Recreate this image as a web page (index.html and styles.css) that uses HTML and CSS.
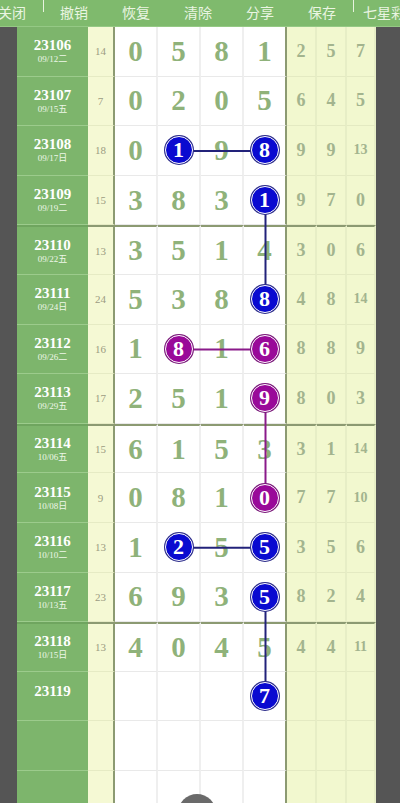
FILE: index.html
```html
<!DOCTYPE html>
<html lang="zh">
<head>
<meta charset="utf-8">
<title>七星彩走势</title>
<link rel="stylesheet" href="styles.css">
</head>
<body>
<div class="topbar">
  <span class="tab">关闭</span>
  <span class="tab sep">撤销</span>
  <span class="tab">恢复</span>
  <span class="tab">清除</span>
  <span class="tab">分享</span>
  <span class="tab">保存</span>
  <span class="tab sep">七星彩</span>
</div>
<div class="board">
  <div class="side"></div>
  <div class="grid">
    <div class="row">
      <div class="c iss"><b>23106</b><i>09/12二</i></div><div class="c sum">14</div>
      <div class="c w">0</div><div class="c w">5</div><div class="c w">8</div><div class="c w last">1</div>
      <div class="c y">2</div><div class="c y">5</div><div class="c y">7</div>
    </div>
    <div class="row">
      <div class="c iss"><b>23107</b><i>09/15五</i></div><div class="c sum">7</div>
      <div class="c w">0</div><div class="c w">2</div><div class="c w">0</div><div class="c w last">5</div>
      <div class="c y">6</div><div class="c y">4</div><div class="c y">5</div>
    </div>
    <div class="row">
      <div class="c iss"><b>23108</b><i>09/17日</i></div><div class="c sum">18</div>
      <div class="c w">0</div><div class="c w"><span class="ball b">1</span></div><div class="c w">9</div><div class="c w last"><span class="ball b">8</span></div>
      <div class="c y">9</div><div class="c y">9</div><div class="c y s">13</div>
    </div>
    <div class="row">
      <div class="c iss"><b>23109</b><i>09/19二</i></div><div class="c sum">15</div>
      <div class="c w">3</div><div class="c w">8</div><div class="c w">3</div><div class="c w last"><span class="ball b">1</span></div>
      <div class="c y">9</div><div class="c y">7</div><div class="c y">0</div>
    </div>
    <div class="row g">
      <div class="c iss"><b>23110</b><i>09/22五</i></div><div class="c sum">13</div>
      <div class="c w">3</div><div class="c w">5</div><div class="c w">1</div><div class="c w last">4</div>
      <div class="c y">3</div><div class="c y">0</div><div class="c y">6</div>
    </div>
    <div class="row">
      <div class="c iss"><b>23111</b><i>09/24日</i></div><div class="c sum">24</div>
      <div class="c w">5</div><div class="c w">3</div><div class="c w">8</div><div class="c w last"><span class="ball b">8</span></div>
      <div class="c y">4</div><div class="c y">8</div><div class="c y s">14</div>
    </div>
    <div class="row">
      <div class="c iss"><b>23112</b><i>09/26二</i></div><div class="c sum">16</div>
      <div class="c w">1</div><div class="c w"><span class="ball p">8</span></div><div class="c w">1</div><div class="c w last"><span class="ball p">6</span></div>
      <div class="c y">8</div><div class="c y">8</div><div class="c y">9</div>
    </div>
    <div class="row">
      <div class="c iss"><b>23113</b><i>09/29五</i></div><div class="c sum">17</div>
      <div class="c w">2</div><div class="c w">5</div><div class="c w">1</div><div class="c w last"><span class="ball p">9</span></div>
      <div class="c y">8</div><div class="c y">0</div><div class="c y">3</div>
    </div>
    <div class="row g">
      <div class="c iss"><b>23114</b><i>10/06五</i></div><div class="c sum">15</div>
      <div class="c w">6</div><div class="c w">1</div><div class="c w">5</div><div class="c w last">3</div>
      <div class="c y">3</div><div class="c y">1</div><div class="c y s">14</div>
    </div>
    <div class="row">
      <div class="c iss"><b>23115</b><i>10/08日</i></div><div class="c sum">9</div>
      <div class="c w">0</div><div class="c w">8</div><div class="c w">1</div><div class="c w last"><span class="ball p">0</span></div>
      <div class="c y">7</div><div class="c y">7</div><div class="c y s">10</div>
    </div>
    <div class="row">
      <div class="c iss"><b>23116</b><i>10/10二</i></div><div class="c sum">13</div>
      <div class="c w">1</div><div class="c w"><span class="ball b">2</span></div><div class="c w">5</div><div class="c w last"><span class="ball b">5</span></div>
      <div class="c y">3</div><div class="c y">5</div><div class="c y">6</div>
    </div>
    <div class="row">
      <div class="c iss"><b>23117</b><i>10/13五</i></div><div class="c sum">23</div>
      <div class="c w">6</div><div class="c w">9</div><div class="c w">3</div><div class="c w last"><span class="ball b">5</span></div>
      <div class="c y">8</div><div class="c y">2</div><div class="c y">4</div>
    </div>
    <div class="row g">
      <div class="c iss"><b>23118</b><i>10/15日</i></div><div class="c sum">13</div>
      <div class="c w">4</div><div class="c w">0</div><div class="c w">4</div><div class="c w last">5</div>
      <div class="c y">4</div><div class="c y">4</div><div class="c y s">11</div>
    </div>
    <div class="row">
      <div class="c iss top"><b>23119</b></div><div class="c sum"></div>
      <div class="c w"></div><div class="c w"></div><div class="c w"></div><div class="c w last"><span class="ball b">7</span></div>
      <div class="c y"></div><div class="c y"></div><div class="c y"></div>
    </div>
    <div class="row">
      <div class="c iss"></div><div class="c sum"></div>
      <div class="c w"></div><div class="c w"></div><div class="c w"></div><div class="c w last"></div>
      <div class="c y"></div><div class="c y"></div><div class="c y"></div>
    </div>
    <div class="row">
      <div class="c iss"></div><div class="c sum"></div>
      <div class="c w"></div><div class="c w"></div><div class="c w"></div><div class="c w last"></div>
      <div class="c y"></div><div class="c y"></div><div class="c y"></div>
    </div>
    <svg class="links" width="359" height="800" viewBox="0 0 359 800">
      <line class="lb" x1="162.5" y1="124" x2="248.5" y2="124"/>
      <line class="lb" x1="248.5" y1="173.6" x2="248.5" y2="272.8"/>
      <line class="lp" x1="162.5" y1="322.4" x2="248.5" y2="322.4"/>
      <line class="lp" x1="248.5" y1="372" x2="248.5" y2="471.2"/>
      <line class="lb" x1="162.5" y1="520.8" x2="248.5" y2="520.8"/>
      <line class="lb" x1="248.5" y1="570.4" x2="248.5" y2="669.6"/>
    </svg>
  </div>
  <div class="side right"></div>
</div>
<div class="fab"></div>
</body>
</html>
```

FILE: styles.css
```css
* { box-sizing: border-box; }
html, body {
  margin: 0;
  width: 400px;
  height: 803px;
  overflow: hidden;
  background: #555555;
}
body {
  font-family: "Liberation Serif", "Noto Sans CJK SC", serif;
  position: relative;
}
.topbar {
  height: 27px;
  background: #7fba6d;
  border-bottom: 1px solid #95c985;
  display: flex;
  overflow: hidden;
}
.tab {
  flex: 0 0 62px;
  text-align: center;
  font-family: "Noto Sans CJK SC", sans-serif;
  font-size: 14px;
  line-height: 25px;
  color: #eaf5e2;
  position: relative;
}
.tab:first-child { margin-left: -19px; }
.sep::before {
  content: "";
  position: absolute;
  left: 0;
  top: 0;
  width: 1px;
  height: 12px;
  background: #e8f3df;
}
.board {
  display: flex;
  height: 776px;
}
.side {
  flex: 0 0 17px;
  background: #555555;
}
.side.right { flex-basis: 24px; }
.grid {
  position: relative;
  flex: 0 0 359px;
  display: grid;
  grid-template-columns: 71px 27px repeat(4, 43px) 30px 30px 29px;
  grid-auto-rows: 49.6px;
  background: #ffffff;
  overflow: hidden;
}
.row { display: contents; }
.c {
  display: flex;
  align-items: center;
  justify-content: center;
  border-bottom: 1px solid #e9e9e9;
}
.iss {
  background: #7db56c;
  border-bottom: 1px solid #9ccb8c;
  flex-direction: column;
  color: #ffffff;
}
.iss.top { justify-content: flex-start; padding-top: 11px; }
.iss b { font-size: 15px; line-height: 16px; }
.iss i {
  font-style: normal;
  font-size: 9px;
  line-height: 12px;
  color: #eef7e8;
}
.sum {
  background: #f5f9d4;
  border-bottom-color: #e6ebc4;
  border-right: 2px solid #8c9a72;
  font-size: 11px;
  color: #9c9c82;
}
.w {
  font-weight: bold;
  font-size: 29px;
  color: #8fb27a;
  border-right: 2px solid #efefef;
}
.w.last { border-right: 2px solid #8c9a72; }
.y {
  background: #f2f8cf;
  border-right: 2px solid #e7eec6;
  border-bottom-color: #e4eac2;
  font-weight: bold;
  font-size: 18px;
  color: #a3b48e;
}
.y.s { font-size: 14px; }
.row.g > .c { border-top: 2px solid #8c9a72; }
.row.g > .iss { border-top: 2px solid #6fa55f; }
.ball {
  position: relative;
  z-index: 2;
  width: 28px;
  height: 28px;
  border-radius: 50%;
  display: flex;
  align-items: center;
  justify-content: center;
  color: #ffffff;
  font-size: 22px;
  font-weight: bold;
  border: 1.5px solid #ffffff;
}
.b { background: #0a0ad0; box-shadow: 0 0 0 1px #2d2d8a; }
.p { background: #990a99; box-shadow: 0 0 0 1px #7a1a7a; }
.links {
  position: absolute;
  left: 0;
  top: 0;
  z-index: 1;
  pointer-events: none;
}
.lb { stroke: #22227a; stroke-width: 2; }
.lp { stroke: #8a1a8a; stroke-width: 2; }
.fab {
  position: absolute;
  left: 178px;
  top: 794px;
  width: 38px;
  height: 38px;
  border-radius: 50%;
  background: #6a6a6a;
}
```
